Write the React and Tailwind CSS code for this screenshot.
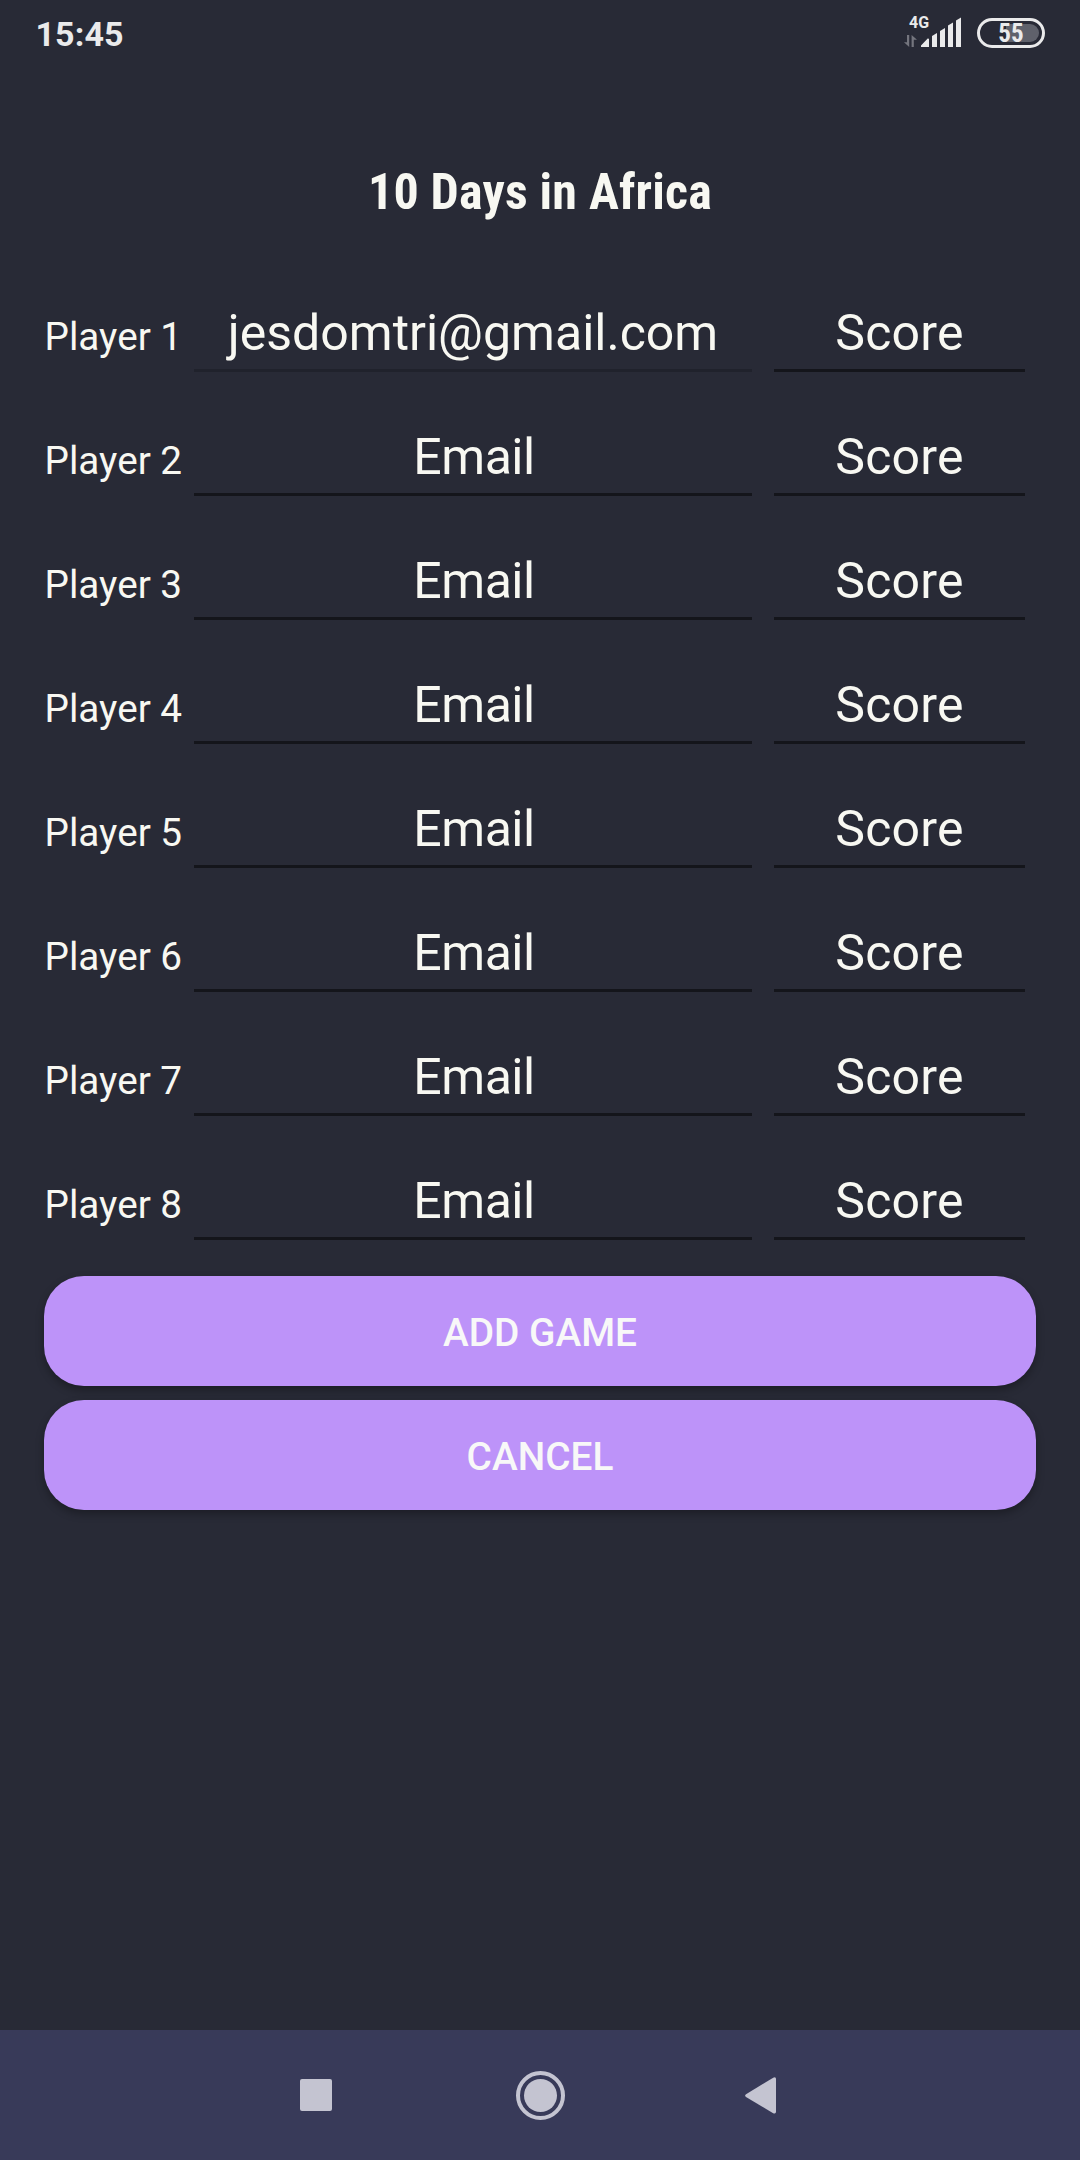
const players = [1, 2, 3, 4, 5, 6, 7, 8];

function StatusBar() {
  return (
    <header className="flex h-[66px] items-start pr-[35px] pl-[35.5px] text-[#eaeaeb]">
      <span className="mt-[14px] text-[34px] leading-[40px] font-bold tracking-[0.1px]">15:45</span>
      <div className="ml-auto flex items-start">
        <div className="mt-[15px] flex w-[27px] flex-col">
          <span className="ml-[6px] text-[16px] leading-[15px] font-bold">4G</span>
          <svg className="mt-[5px] ml-px" width="14" height="12" viewBox="0 0 14 12" fill="#74757e">
            <path d="M3 0h2.2v12L0 7.2h3z" />
            <path d="M7.6 12V0L13 4.8H9.8V12z" />
          </svg>
        </div>
        <svg className="mt-[17px] ml-[-10px]" width="42" height="30" viewBox="0 0 42 30" fill="currentColor">
          <path d="M1 30v-1.5l6-6.3a1 1 0 0 1 2 .6V30z" />
          <path d="M12 30V19l5-3v14z" />
          <path d="M20 30V14l5-3v19z" />
          <path d="M28 30V8.500l5-3V30z" />
          <path d="M36 30V3.500l5-3V30z" />
        </svg>
        <div className="relative mt-[18px] ml-[15px] flex h-[30px] w-[68px] items-center justify-center rounded-full border-[3px]">
          <div className="absolute top-[3px] right-[3px] h-[18px] w-[33px] rounded-r-full bg-[#5f616b]" />
          <span className="relative pt-px font-['Roboto_Condensed','Roboto',sans-serif] text-[25px] leading-[24px] font-bold [font-stretch:75%]">
            55
          </span>
        </div>
      </div>
    </header>
  );
}

function PlayerRow({ number }) {
  const first = number === 1;
  return (
    <div className="flex h-[124px] items-baseline">
      <label className="w-[150px] shrink-0 pl-[0.5px] text-[38.700px] whitespace-nowrap">Player {number}</label>
      <input
        className={
          "h-[114px] w-[558px] border-b-[3px] bg-transparent pt-[45px] pb-[6px] text-center text-[50px] leading-[60px] placeholder:text-[#f8f8f2] " +
          (first ? "border-[#20222c]" : "border-[#14151b] pl-[2px] tracking-[-0.5px]")
        }
        placeholder="Email"
        defaultValue={first ? "jesdomtri@gmail.com" : ""}
        spellCheck={false}
      />
      <input
        className="ml-[22px] h-[114px] w-[251px] border-b-[3px] border-[#14151b] bg-transparent pt-[45px] pb-[6px] text-center text-[50px] leading-[60px] tracking-[0.2px] placeholder:text-[#f8f8f2]"
        placeholder="Score"
      />
    </div>
  );
}

function ActionButton({ children }) {
  return (
    <button className="h-[110px] w-full rounded-[40px] bg-[#bd93f9] pt-[5px] text-[38.800px] font-medium text-[#f8f8f8] uppercase shadow-[0_4px_8px_rgba(0,0,0,0.3)]">
      {children}
    </button>
  );
}

function NavigationBar() {
  return (
    <nav className="mt-auto flex h-[130px] items-center justify-between bg-[#383a59] pr-[304px] pl-[300px] text-[#c4c4d1]">
      <div className="h-8 w-8 rounded-[2px] bg-current" />
      <svg className="ml-[4px]" width="50" height="50" viewBox="0 0 50 50">
        <circle cx="25.500" cy="25.500" r="22.500" fill="none" stroke="currentColor" strokeWidth="4" />
        <circle cx="25.500" cy="25.500" r="16.500" fill="currentColor" />
      </svg>
      <svg width="32" height="38" viewBox="0 0 32 38" fill="currentColor">
        <path d="M2 18.200 29.200 1.700Q32 .6 32 3.100V35.700Q32 38.200 29.200 37.200L2 20.900Q.2 19.600 2 18.200z" />
      </svg>
    </nav>
  );
}

export default function App() {
  return (
    <div className="flex h-[2160px] w-[1080px] flex-col bg-[#282a36] font-['Roboto',sans-serif] text-[#f8f8f2]">
      <StatusBar />
      <main className="px-11">
        <h1 className="h-[192px] pt-[96px] text-center font-['Roboto_Condensed','Roboto',sans-serif] text-[50px] leading-[60px] font-bold tracking-[0.2px] [font-stretch:75%]">
          10 Days in Africa
        </h1>
        {players.map((n) => (
          <PlayerRow key={n} number={n} />
        ))}
        <div className="mt-[26px] flex flex-col gap-[14px]">
          <ActionButton>Add game</ActionButton>
          <ActionButton>Cancel</ActionButton>
        </div>
      </main>
      <NavigationBar />
    </div>
  );
}
